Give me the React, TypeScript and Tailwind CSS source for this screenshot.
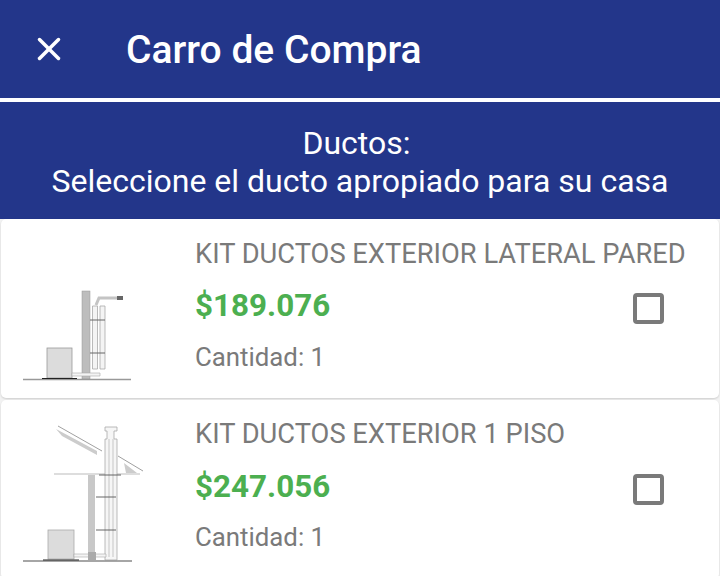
import { X } from "lucide-react";

type Item = {
  id: number;
  name: string;
  price: string;
  qty: number;
};

const items: Item[] = [
  { id: 1, name: "KIT DUCTOS EXTERIOR LATERAL PARED", price: "$189.076", qty: 1 },
  { id: 2, name: "KIT DUCTOS EXTERIOR 1 PISO", price: "$247.056", qty: 1 },
];

function LateralDiagram() {
  return (
    <svg width="180" height="170" viewBox="0 0 180 170" className="blur-[0.5px] -ml-px mt-[11px]">
      <rect x="47" y="118" width="25" height="30" fill="#dcdcdc" stroke="#999" strokeWidth="0.8" />
      <rect x="82" y="61" width="8" height="88" fill="#bdbdbd" stroke="#999" strokeWidth="0.5" />
      <path d="M92.500 76h5v63h-5zM100 76h5v63h-5z" fill="#f4f4f4" stroke="#aaa" strokeWidth="0.8" />
      <path d="M96 75l3-7h18" fill="none" stroke="#c4c4c4" strokeWidth="3" />
      <rect x="117" y="66" width="6" height="4" fill="#666" />
      <path d="M90 90h15M90 123h15" stroke="#666" strokeWidth="1" />
      <path d="M72 143h28v3H72z" fill="#f4f4f4" stroke="#aaa" strokeWidth="0.6" />
      <path d="M23 149.500h108" stroke="#999" strokeWidth="1.400" />
      <path d="M42 148.500h35" stroke="#222" strokeWidth="1.200" />
    </svg>
  );
}

function RoofDiagram() {
  return (
    <svg width="180" height="176" viewBox="0 0 180 176" className="blur-[0.5px] -ml-px -mt-px">
      <path d="M58 27l44 25M118 57l25 15" stroke="#888" strokeWidth="0.8" />
      <path d="M56 30l41 22v4L62 37zM124 64l13 10h-11z" fill="#ccc" />
      <path d="M54 75h86" stroke="#bbb" strokeWidth="1.200" />
      <rect x="88" y="76" width="7" height="84" fill="#c8c8c8" />
      <path d="M105 28h12v4h-3v8h3v121h-12V40h2v-8h-2z" fill="#f6f6f6" stroke="#aaa" strokeWidth="0.8" />
      <path d="M109 40v118M113 40v118" stroke="#bbb" strokeWidth="0.8" />
      <path d="M99 76h22M96 98h20M96 131h20" stroke="#555" strokeWidth="0.9" />
      <rect x="48" y="131" width="26" height="29" fill="#dcdcdc" stroke="#aaa" strokeWidth="0.8" />
      <path d="M74 155h32v3H74z" fill="#f4f4f4" stroke="#aaa" strokeWidth="0.6" />
      <rect x="88" y="153" width="8" height="8" fill="#aaa" />
      <path d="M23 162h109" stroke="#888" strokeWidth="1.400" />
      <path d="M43 161h36" stroke="#222" strokeWidth="1.200" />
    </svg>
  );
}

export default function App() {
  return (
    <div className="w-[720px] h-[576px] overflow-hidden bg-[#f2f2f2] font-['Roboto',sans-serif]">
      <header className="h-[98px] bg-[#23368a] flex items-center text-white">
        <div className="w-[98px] flex justify-center">
          <X size={38} strokeWidth={2.2} />
        </div>
        <h1 className="ml-[28px] pt-[3px] text-[39px] font-medium">Carro de Compra</h1>
      </header>
      <div className="h-1 bg-white" />
      <div className="h-[117px] bg-[#23368a] text-white text-center text-[32px] leading-[38px] pt-[22px]">
        <p className="pr-[7px]">Ductos:</p>
        <p>Seleccione el ducto apropiado para su casa</p>
      </div>

      <div className="flex flex-col gap-[2px]">
        {items.map((item) => (
          <div key={item.id} className="h-[179px] mx-px bg-white rounded-[5px] shadow-[0_1px_2px_rgba(0,0,0,0.15)] flex">
            <div className="w-[194px] shrink-0 overflow-hidden">
              {item.id === 1 ? <LateralDiagram /> : <RoofDiagram />}
            </div>
            <div className={item.id === 1 ? "flex-1 pt-[18px]" : "flex-1 pt-[17px]"}>
              <p className="text-[27.3px] leading-[34px] text-[#7a7a7a] whitespace-nowrap">{item.name}</p>
              <div className={item.id === 1 ? "mt-[17px] flex items-start justify-between pr-[55px]" : "mt-[18px] flex items-start justify-between pr-[55px]"}>
                <p className="text-[31.4px] leading-[36px] font-bold text-[#4caf50]">{item.price}</p>
                <span className="mt-[5px] w-[31px] h-[31px] border-[4px] border-[#7a7a7a] rounded-[4px]" />
              </div>
              <p className={item.id === 1 ? "mt-[17px] text-[25.800px] leading-[32px] text-[#7a7a7a]" : "mt-[16px] text-[25.800px] leading-[32px] text-[#7a7a7a]"}>Cantidad: {item.qty}</p>
            </div>
          </div>
        ))}
      </div>
    </div>
  );
}
